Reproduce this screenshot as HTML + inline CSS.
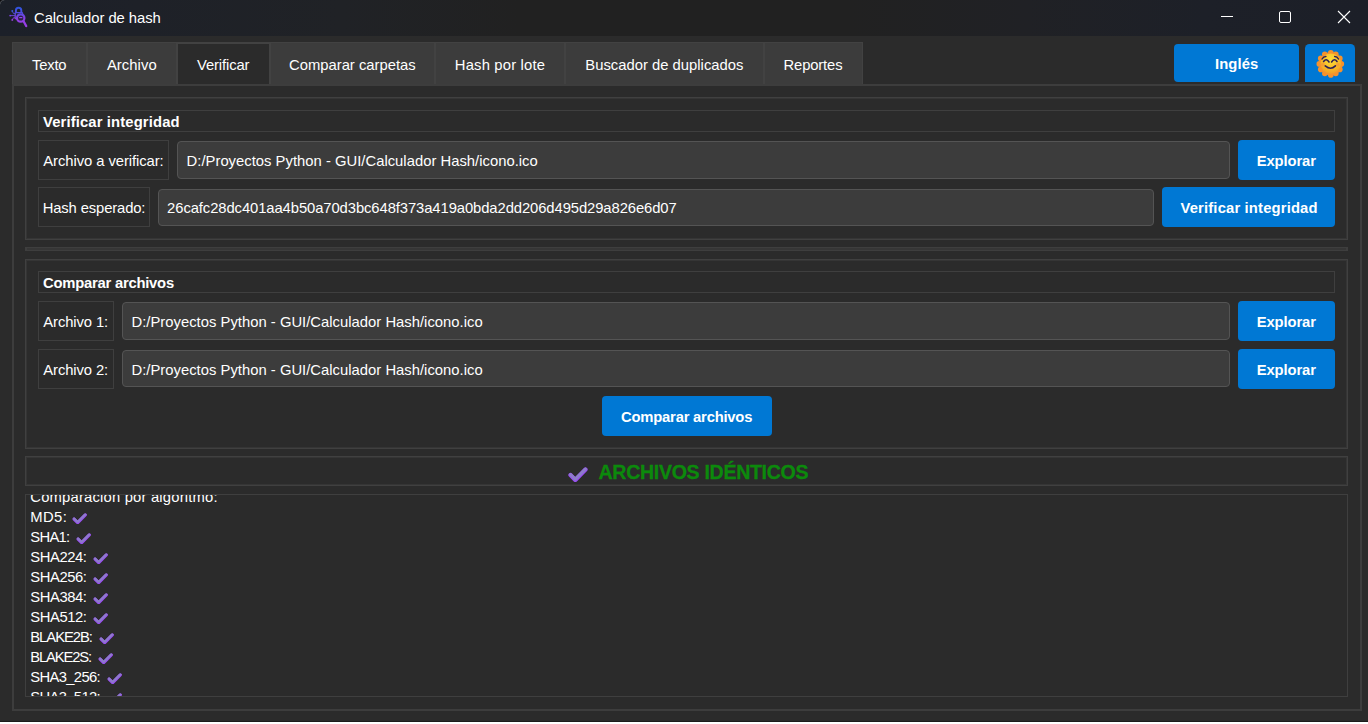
<!DOCTYPE html>
<html><head><meta charset="utf-8"><title>Calculador de hash</title>
<style>
html,body{margin:0;padding:0;}
body{width:1368px;height:724px;background:#2b2b2b;overflow:hidden;position:relative;font-family:"Liberation Sans",sans-serif;}
div{position:absolute;}
.t{position:absolute;white-space:nowrap;line-height:20px;height:20px;font-family:"Liberation Sans",sans-serif;}
</style></head><body>
<div class="" style="left:0px;top:0px;width:1368px;height:36px;background:linear-gradient(90deg,#1c2029 0%,#1e2128 10%,#202226 25%,#212121 38%,#212121 62%,#202125 75%,#1d2028 88%,#1c1f28 100%);"></div>
<svg style="position:absolute;left:9px;top:6px" width="19" height="22" viewBox="0 0 19 22">
<defs><linearGradient id="ig" gradientUnits="userSpaceOnUse" x1="0" y1="1" x2="0" y2="20"><stop offset="0" stop-color="#2b55dc"/><stop offset="0.35" stop-color="#5a4ae0"/><stop offset="0.6" stop-color="#8a3fe0"/><stop offset="1" stop-color="#9a3ee6"/></linearGradient></defs>
<g stroke="url(#ig)" fill="none">
<path d="M6.9 6.4 V4.4 a2.7 2.7 0 0 1 5.4 0 V6.4" stroke-width="1.9"/>
<rect x="6.2" y="6.6" width="7.4" height="6.2" rx="0.8" fill="#1f2030" stroke-width="1.3"/>
<circle cx="11.7" cy="12" r="3.7" fill="#2a2140" stroke-width="2.2"/>
<path d="M14.6 15.2 L17.2 20" stroke-width="2.3" stroke-linecap="round"/>
<path d="M3.4 5.2 L4.4 7.4 H6 M1 9.6 H6 M3.4 13.8 L4.4 11.8 H6" stroke-width="0.9"/>
</g>
<circle cx="3.3" cy="5" r="0.95" fill="#3f57de"/><circle cx="1.2" cy="9.6" r="0.95" fill="#7a40de"/><circle cx="3.3" cy="13.9" r="0.95" fill="#9a40e4"/>
<path d="M10.2 11 h3.2 v1.2 h-3.2z" fill="#8e48ee"/>
</svg>
<span class="t" style="left:34.00px;top:8.00px;font-size:14.8px;font-weight:400;color:#ffffff;letter-spacing:-0.041px;">Calculador de hash</span>
<svg style="position:absolute;left:0;top:0" width="5" height="5" viewBox="0 0 5 5"><path d="M0 0 H4 A4 4 0 0 0 0 4 Z" fill="#0c0c0e"/><path d="M0 4.3 A4.3 4.3 0 0 1 4.3 0" fill="none" stroke="#55585e" stroke-width="0.9"/></svg>
<div style="position:absolute;left:1221px;top:16px;width:12px;height:1px;background:#fff"></div>
<div style="position:absolute;left:1279px;top:11px;width:10px;height:10px;border:1px solid #fff;border-radius:2px"></div>
<svg style="position:absolute;left:1337px;top:10px" width="14" height="14" viewBox="0 0 14 14"><path d="M1 1 L13 13 M13 1 L1 13" stroke="#fff" stroke-width="1.1" fill="none"/></svg>
<div class="" style="left:12px;top:84px;width:1350px;height:627px;border:2px solid #3d3d3d;box-sizing:border-box;"></div>
<div class="" style="left:12px;top:42px;width:851px;height:42px;background:#424242;"></div>
<div class="" style="left:13px;top:43px;width:73px;height:41px;background:#3c3c3c;"></div>
<span class="t" style="left:32.00px;top:55.00px;font-size:14.8px;font-weight:400;color:#ffffff;letter-spacing:-0.200px;">Texto</span>
<div class="" style="left:88px;top:43px;width:88px;height:41px;background:#3c3c3c;"></div>
<span class="t" style="left:106.90px;top:55.00px;font-size:14.8px;font-weight:400;color:#ffffff;letter-spacing:0.067px;">Archivo</span>
<div class="" style="left:178px;top:44px;width:91px;height:40px;background:#2b2b2b;"></div>
<span class="t" style="left:197.00px;top:55.00px;font-size:14.8px;font-weight:400;color:#ffffff;letter-spacing:-0.125px;">Verificar</span>
<div class="" style="left:271px;top:43px;width:163px;height:41px;background:#3c3c3c;"></div>
<span class="t" style="left:289.00px;top:55.00px;font-size:14.8px;font-weight:400;color:#ffffff;">Comparar carpetas</span>
<div class="" style="left:436px;top:43px;width:128px;height:41px;background:#3c3c3c;"></div>
<span class="t" style="left:454.77px;top:55.00px;font-size:14.8px;font-weight:400;color:#ffffff;letter-spacing:0.188px;">Hash por lote</span>
<div class="" style="left:566px;top:43px;width:197px;height:41px;background:#3c3c3c;"></div>
<span class="t" style="left:585.27px;top:55.00px;font-size:14.8px;font-weight:400;color:#ffffff;letter-spacing:0.012px;">Buscador de duplicados</span>
<div class="" style="left:765px;top:43px;width:97px;height:41px;background:#3c3c3c;"></div>
<span class="t" style="left:783.50px;top:55.00px;font-size:14.8px;font-weight:400;color:#ffffff;letter-spacing:-0.143px;">Reportes</span>
<div class="" style="left:1174px;top:44px;width:125px;height:38px;background:#0078d4;border-radius:4px;"></div>
<span class="t" style="left:1214.95px;top:54.00px;font-size:14.8px;font-weight:700;color:#ffffff;letter-spacing:0.100px;">Inglés</span>
<div class="" style="left:1305px;top:44px;width:50px;height:38px;background:#0078d4;border-radius:4.5px 4.5px 0 0;"></div>
<svg style="position:absolute;left:1316px;top:49px" width="29" height="30" viewBox="0 0 29 30">
<defs><radialGradient id="sg" cx="0.5" cy="0.3" r="0.75"><stop offset="0" stop-color="#fde03a"/><stop offset="0.55" stop-color="#f8bd28"/><stop offset="1" stop-color="#f19a24"/></radialGradient>
<radialGradient id="pg" cx="0.5" cy="0.5" r="0.5"><stop offset="0.6" stop-color="#f7a030"/><stop offset="1" stop-color="#f48a2a"/></radialGradient></defs>
<g fill="#f6922c"><circle cx="14.80" cy="3.90" r="2.8"/><circle cx="19.80" cy="5.37" r="2.8"/><circle cx="23.83" cy="9.40" r="2.8"/><circle cx="25.30" cy="14.90" r="2.8"/><circle cx="23.83" cy="20.40" r="2.8"/><circle cx="19.80" cy="24.43" r="2.8"/><circle cx="14.80" cy="25.90" r="2.8"/><circle cx="8.80" cy="24.43" r="2.8"/><circle cx="4.77" cy="20.40" r="2.8"/><circle cx="3.30" cy="14.90" r="2.8"/><circle cx="4.77" cy="9.40" r="2.8"/><circle cx="8.80" cy="5.37" r="2.8"/><circle cx="14.8" cy="14.9" r="11.6"/></g>
<circle cx="14.8" cy="14.6" r="10.2" fill="url(#sg)"/>
<circle cx="6.9" cy="15.6" r="1.9" fill="#f58a3a" opacity=".55"/><circle cx="21.7" cy="15.6" r="1.9" fill="#f58a3a" opacity=".55"/>
<g stroke="#2d1f55" fill="none" stroke-linecap="round">
<path d="M6.1 10 Q7.4 7.4 9.9 7.4 M18.7 7.4 Q21.2 7.4 22.5 10" stroke-width="1.45"/>
<path d="M7.6 12.5 Q10.3 8.9 13 13 M15.6 13 Q18.3 8.9 21 12.5" stroke-width="1.6"/>
<path d="M9.2 16.9 Q14.8 21.6 19.4 16.9" stroke-width="1.6"/>
</g>
</svg>
<div class="" style="left:25px;top:97px;width:1323px;height:143px;border:1px solid #404040;box-sizing:border-box;box-shadow:inset 0 0 0 1px #353535;"></div>
<div class="" style="left:38px;top:110px;width:1297px;height:22px;border:1px solid #3f3f3f;box-sizing:border-box;"></div>
<span class="t" style="left:43.00px;top:112.00px;font-size:14.8px;font-weight:700;color:#ffffff;letter-spacing:0.132px;">Verificar integridad</span>
<div class="" style="left:38px;top:140px;width:131px;height:40px;border:1px solid #3f3f3f;box-sizing:border-box;"></div>
<span class="t" style="left:43.30px;top:151.00px;font-size:14.8px;font-weight:400;color:#ffffff;letter-spacing:-0.068px;">Archivo a verificar:</span>
<div class="" style="left:177px;top:141px;width:1053px;height:37.599999999999994px;background:#3c3c3c;border:1px solid #545454;box-sizing:border-box;border-radius:4px;"></div>
<span class="t" style="left:186.60px;top:151.00px;font-size:14.8px;font-weight:400;color:#ffffff;letter-spacing:0.016px;">D:/Proyectos Python - GUI/Calculador Hash/icono.ico</span>
<div class="" style="left:1238px;top:140px;width:97px;height:40px;background:#0078d4;border-radius:4px;"></div>
<span class="t" style="left:1256.67px;top:151.00px;font-size:14.8px;font-weight:700;color:#ffffff;letter-spacing:-0.107px;">Explorar</span>
<div class="" style="left:38px;top:187px;width:112px;height:40px;border:1px solid #3f3f3f;box-sizing:border-box;"></div>
<span class="t" style="left:42.70px;top:198.00px;font-size:14.8px;font-weight:400;color:#ffffff;letter-spacing:-0.131px;">Hash esperado:</span>
<div class="" style="left:158px;top:189px;width:996px;height:37px;background:#3c3c3c;border:1px solid #545454;box-sizing:border-box;border-radius:4px;"></div>
<span class="t" style="left:167.10px;top:198.00px;font-size:14.8px;font-weight:400;color:#ffffff;letter-spacing:-0.087px;">26cafc28dc401aa4b50a70d3bc648f373a419a0bda2dd206d495d29a826e6d07</span>
<div class="" style="left:1162px;top:187px;width:173px;height:40px;background:#0078d4;border-radius:4px;"></div>
<span class="t" style="left:1180.50px;top:198.00px;font-size:14.8px;font-weight:700;color:#ffffff;letter-spacing:0.158px;">Verificar integridad</span>
<div class="" style="left:25px;top:247px;width:1323px;height:4px;background:#363636;border:1px solid #3e3e3e;border-left-width:2px;border-right-width:2px;box-sizing:border-box;"></div>
<div class="" style="left:25px;top:259px;width:1323px;height:190px;border:1px solid #404040;box-sizing:border-box;box-shadow:inset 0 0 0 1px #353535;"></div>
<div class="" style="left:38px;top:271px;width:1297px;height:22px;border:1px solid #3f3f3f;box-sizing:border-box;"></div>
<span class="t" style="left:43.00px;top:273.00px;font-size:14.8px;font-weight:700;color:#ffffff;letter-spacing:-0.234px;">Comparar archivos</span>
<div class="" style="left:38px;top:301px;width:76px;height:40px;border:1px solid #3f3f3f;box-sizing:border-box;"></div>
<span class="t" style="left:43.30px;top:312.00px;font-size:14.8px;font-weight:400;color:#ffffff;letter-spacing:-0.100px;">Archivo 1:</span>
<div class="" style="left:122px;top:302px;width:1108px;height:37.80000000000001px;background:#3c3c3c;border:1px solid #545454;box-sizing:border-box;border-radius:4px;"></div>
<span class="t" style="left:131.50px;top:312.00px;font-size:14.8px;font-weight:400;color:#ffffff;letter-spacing:0.016px;">D:/Proyectos Python - GUI/Calculador Hash/icono.ico</span>
<div class="" style="left:1238px;top:301px;width:97px;height:40px;background:#0078d4;border-radius:4px;"></div>
<span class="t" style="left:1256.67px;top:312.00px;font-size:14.8px;font-weight:700;color:#ffffff;letter-spacing:-0.107px;">Explorar</span>
<div class="" style="left:38px;top:349px;width:76px;height:40px;border:1px solid #3f3f3f;box-sizing:border-box;"></div>
<span class="t" style="left:43.30px;top:360.00px;font-size:14.8px;font-weight:400;color:#ffffff;letter-spacing:-0.100px;">Archivo 2:</span>
<div class="" style="left:122px;top:350.4px;width:1108px;height:36.60000000000002px;background:#3c3c3c;border:1px solid #545454;box-sizing:border-box;border-radius:4px;"></div>
<span class="t" style="left:131.50px;top:360.00px;font-size:14.8px;font-weight:400;color:#ffffff;letter-spacing:0.016px;">D:/Proyectos Python - GUI/Calculador Hash/icono.ico</span>
<div class="" style="left:1238px;top:349px;width:97px;height:40px;background:#0078d4;border-radius:4px;"></div>
<span class="t" style="left:1256.67px;top:360.00px;font-size:14.8px;font-weight:700;color:#ffffff;letter-spacing:-0.107px;">Explorar</span>
<div class="" style="left:602px;top:396px;width:169.5px;height:40px;background:#0078d4;border-radius:4px;"></div>
<span class="t" style="left:621.05px;top:407.00px;font-size:14.8px;font-weight:700;color:#ffffff;letter-spacing:-0.219px;">Comparar archivos</span>
<div class="" style="left:25px;top:456px;width:1323px;height:30px;border:1px solid #404040;box-sizing:border-box;box-shadow:inset 0 0 0 1px #353535;"></div>
<svg style="position:absolute;left:568px;top:466.5px" width="20" height="15.6" viewBox="0 0 20 15.6"><path d="M2.5 8.1 L7.3 12.9 L17.5 2.5" fill="none" stroke="#9a4cf4" stroke-width="4.3" stroke-linecap="round" stroke-linejoin="round"/><path d="M2.5 7.5 L7.2 12.1 L17.3 2.1" fill="none" stroke="#8d7bcb" stroke-width="3" stroke-linecap="round" stroke-linejoin="round"/></svg>
<span class="t" style="left:598.50px;top:462.00px;font-size:19.6px;font-weight:700;color:#0c8a0c;-webkit-text-stroke:0.3px #0c8a0c;letter-spacing:-0.324px;">ARCHIVOS IDÉNTICOS</span>
<div style="position:absolute;left:25px;top:494px;width:1323px;height:203px;border:1px solid #3f3f3f;box-sizing:border-box;overflow:hidden"><div style="position:absolute;left:-26px;top:-495px;width:1368px;height:724px">
<span class="t" style="left:30.30px;top:487.00px;font-size:14.8px;font-weight:400;color:#ffffff;letter-spacing:0.188px;">Comparación por algoritmo:</span>
<span class="t" style="left:30.30px;top:507.00px;font-size:14.8px;font-weight:400;color:#ffffff;letter-spacing:0.367px;">MD5:</span>
<svg style="position:absolute;left:71.8px;top:512.7px" width="15.4" height="11.7" viewBox="0 0 20 15.6"><path d="M2.5 8.1 L7.3 12.9 L17.5 2.5" fill="none" stroke="#9a4cf4" stroke-width="4.3" stroke-linecap="round" stroke-linejoin="round"/><path d="M2.5 7.5 L7.2 12.1 L17.3 2.1" fill="none" stroke="#8d7bcb" stroke-width="3" stroke-linecap="round" stroke-linejoin="round"/></svg>
<span class="t" style="left:30.30px;top:527.00px;font-size:14.8px;font-weight:400;color:#ffffff;letter-spacing:-0.725px;">SHA1:</span>
<svg style="position:absolute;left:75.8px;top:532.7px" width="15.4" height="11.7" viewBox="0 0 20 15.6"><path d="M2.5 8.1 L7.3 12.9 L17.5 2.5" fill="none" stroke="#9a4cf4" stroke-width="4.3" stroke-linecap="round" stroke-linejoin="round"/><path d="M2.5 7.5 L7.2 12.1 L17.3 2.1" fill="none" stroke="#8d7bcb" stroke-width="3" stroke-linecap="round" stroke-linejoin="round"/></svg>
<span class="t" style="left:30.30px;top:547.00px;font-size:14.8px;font-weight:400;color:#ffffff;letter-spacing:-0.425px;">SHA224:</span>
<svg style="position:absolute;left:92.8px;top:552.7px" width="15.4" height="11.7" viewBox="0 0 20 15.6"><path d="M2.5 8.1 L7.3 12.9 L17.5 2.5" fill="none" stroke="#9a4cf4" stroke-width="4.3" stroke-linecap="round" stroke-linejoin="round"/><path d="M2.5 7.5 L7.2 12.1 L17.3 2.1" fill="none" stroke="#8d7bcb" stroke-width="3" stroke-linecap="round" stroke-linejoin="round"/></svg>
<span class="t" style="left:30.30px;top:567.00px;font-size:14.8px;font-weight:400;color:#ffffff;letter-spacing:-0.425px;">SHA256:</span>
<svg style="position:absolute;left:92.8px;top:572.7px" width="15.4" height="11.7" viewBox="0 0 20 15.6"><path d="M2.5 8.1 L7.3 12.9 L17.5 2.5" fill="none" stroke="#9a4cf4" stroke-width="4.3" stroke-linecap="round" stroke-linejoin="round"/><path d="M2.5 7.5 L7.2 12.1 L17.3 2.1" fill="none" stroke="#8d7bcb" stroke-width="3" stroke-linecap="round" stroke-linejoin="round"/></svg>
<span class="t" style="left:30.30px;top:587.00px;font-size:14.8px;font-weight:400;color:#ffffff;letter-spacing:-0.425px;">SHA384:</span>
<svg style="position:absolute;left:92.8px;top:592.7px" width="15.4" height="11.7" viewBox="0 0 20 15.6"><path d="M2.5 8.1 L7.3 12.9 L17.5 2.5" fill="none" stroke="#9a4cf4" stroke-width="4.3" stroke-linecap="round" stroke-linejoin="round"/><path d="M2.5 7.5 L7.2 12.1 L17.3 2.1" fill="none" stroke="#8d7bcb" stroke-width="3" stroke-linecap="round" stroke-linejoin="round"/></svg>
<span class="t" style="left:30.30px;top:607.00px;font-size:14.8px;font-weight:400;color:#ffffff;letter-spacing:-0.425px;">SHA512:</span>
<svg style="position:absolute;left:92.8px;top:612.7px" width="15.4" height="11.7" viewBox="0 0 20 15.6"><path d="M2.5 8.1 L7.3 12.9 L17.5 2.5" fill="none" stroke="#9a4cf4" stroke-width="4.3" stroke-linecap="round" stroke-linejoin="round"/><path d="M2.5 7.5 L7.2 12.1 L17.3 2.1" fill="none" stroke="#8d7bcb" stroke-width="3" stroke-linecap="round" stroke-linejoin="round"/></svg>
<span class="t" style="left:30.30px;top:627.00px;font-size:14.8px;font-weight:400;color:#ffffff;letter-spacing:-1.043px;">BLAKE2B:</span>
<svg style="position:absolute;left:99.1px;top:632.7px" width="15.4" height="11.7" viewBox="0 0 20 15.6"><path d="M2.5 8.1 L7.3 12.9 L17.5 2.5" fill="none" stroke="#9a4cf4" stroke-width="4.3" stroke-linecap="round" stroke-linejoin="round"/><path d="M2.5 7.5 L7.2 12.1 L17.3 2.1" fill="none" stroke="#8d7bcb" stroke-width="3" stroke-linecap="round" stroke-linejoin="round"/></svg>
<span class="t" style="left:30.30px;top:647.00px;font-size:14.8px;font-weight:400;color:#ffffff;letter-spacing:-1.150px;">BLAKE2S:</span>
<svg style="position:absolute;left:98px;top:652.7px" width="15.4" height="11.7" viewBox="0 0 20 15.6"><path d="M2.5 8.1 L7.3 12.9 L17.5 2.5" fill="none" stroke="#9a4cf4" stroke-width="4.3" stroke-linecap="round" stroke-linejoin="round"/><path d="M2.5 7.5 L7.2 12.1 L17.3 2.1" fill="none" stroke="#8d7bcb" stroke-width="3" stroke-linecap="round" stroke-linejoin="round"/></svg>
<span class="t" style="left:30.30px;top:667.00px;font-size:14.8px;font-weight:400;color:#ffffff;letter-spacing:-0.662px;">SHA3_256:</span>
<svg style="position:absolute;left:107.3px;top:672.7px" width="15.4" height="11.7" viewBox="0 0 20 15.6"><path d="M2.5 8.1 L7.3 12.9 L17.5 2.5" fill="none" stroke="#9a4cf4" stroke-width="4.3" stroke-linecap="round" stroke-linejoin="round"/><path d="M2.5 7.5 L7.2 12.1 L17.3 2.1" fill="none" stroke="#8d7bcb" stroke-width="3" stroke-linecap="round" stroke-linejoin="round"/></svg>
<span class="t" style="left:30.30px;top:687.00px;font-size:14.8px;font-weight:400;color:#ffffff;letter-spacing:-0.662px;">SHA3_512:</span>
<svg style="position:absolute;left:107.3px;top:692.7px" width="15.4" height="11.7" viewBox="0 0 20 15.6"><path d="M2.5 8.1 L7.3 12.9 L17.5 2.5" fill="none" stroke="#9a4cf4" stroke-width="4.3" stroke-linecap="round" stroke-linejoin="round"/><path d="M2.5 7.5 L7.2 12.1 L17.3 2.1" fill="none" stroke="#8d7bcb" stroke-width="3" stroke-linecap="round" stroke-linejoin="round"/></svg>
</div></div>
<div class="" style="left:0px;top:722px;width:1368px;height:2px;background:#ffffff;"></div>
<div class="" style="left:0px;top:721px;width:1368px;height:1px;background:#1c1c1c;"></div>
</body></html>
